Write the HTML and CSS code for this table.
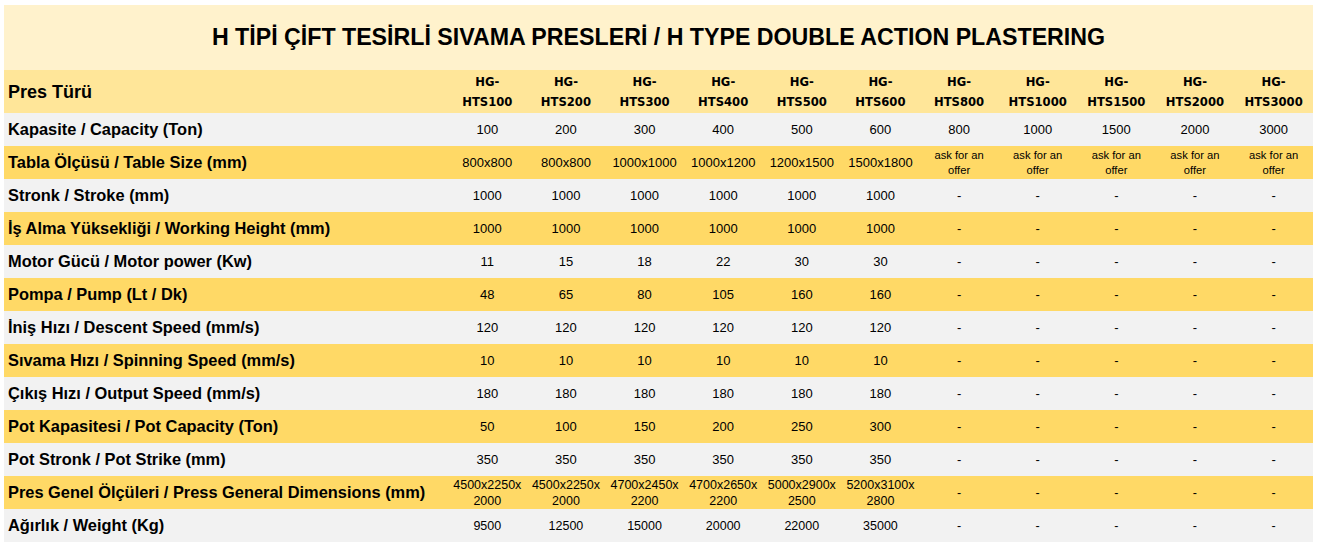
FILE: index.html
```html
<!DOCTYPE html>
<html lang="tr">
<head>
<meta charset="utf-8">
<title>H Tipi Çift Tesirli Sıvama Presleri</title>
<link rel="stylesheet" href="styles.css">
</head>
<body>
<table class="spec">
  <colgroup>
    <col class="c-label">
    <col span="11" class="c-val">
  </colgroup>
  <thead>
    <tr class="title-row"><th colspan="12">H TİPİ ÇİFT TESİRLİ SIVAMA PRESLERİ / H TYPE DOUBLE ACTION PLASTERING</th></tr>
    <tr class="head-row">
      <th class="label main">Pres Türü</th>
      <th>HG-<br>HTS100</th><th>HG-<br>HTS200</th><th>HG-<br>HTS300</th><th>HG-<br>HTS400</th><th>HG-<br>HTS500</th><th>HG-<br>HTS600</th><th>HG-<br>HTS800</th><th>HG-<br>HTS1000</th><th>HG-<br>HTS1500</th><th>HG-<br>HTS2000</th><th>HG-<br>HTS3000</th>
    </tr>
  </thead>
  <tbody>
    <tr class="gray"><th class="label">Kapasite / Capacity (Ton)</th><td>100</td><td>200</td><td>300</td><td>400</td><td>500</td><td>600</td><td>800</td><td>1000</td><td>1500</td><td>2000</td><td>3000</td></tr>
    <tr class="yellow"><th class="label">Tabla Ölçüsü / Table Size (mm)</th><td>800x800</td><td>800x800</td><td>1000x1000</td><td>1000x1200</td><td>1200x1500</td><td>1500x1800</td><td class="ask">ask for an<br>offer</td><td class="ask">ask for an<br>offer</td><td class="ask">ask for an<br>offer</td><td class="ask">ask for an<br>offer</td><td class="ask">ask for an<br>offer</td></tr>
    <tr class="gray"><th class="label">Stronk / Stroke (mm)</th><td>1000</td><td>1000</td><td>1000</td><td>1000</td><td>1000</td><td>1000</td><td>-</td><td>-</td><td>-</td><td>-</td><td>-</td></tr>
    <tr class="yellow"><th class="label">İş Alma Yüksekliği / Working Height (mm)</th><td>1000</td><td>1000</td><td>1000</td><td>1000</td><td>1000</td><td>1000</td><td>-</td><td>-</td><td>-</td><td>-</td><td>-</td></tr>
    <tr class="gray"><th class="label">Motor Gücü / Motor power (Kw)</th><td>11</td><td>15</td><td>18</td><td>22</td><td>30</td><td>30</td><td>-</td><td>-</td><td>-</td><td>-</td><td>-</td></tr>
    <tr class="yellow"><th class="label">Pompa / Pump (Lt / Dk)</th><td>48</td><td>65</td><td>80</td><td>105</td><td>160</td><td>160</td><td>-</td><td>-</td><td>-</td><td>-</td><td>-</td></tr>
    <tr class="gray"><th class="label">İniş Hızı / Descent Speed (mm/s)</th><td>120</td><td>120</td><td>120</td><td>120</td><td>120</td><td>120</td><td>-</td><td>-</td><td>-</td><td>-</td><td>-</td></tr>
    <tr class="yellow"><th class="label">Sıvama Hızı / Spinning Speed (mm/s)</th><td>10</td><td>10</td><td>10</td><td>10</td><td>10</td><td>10</td><td>-</td><td>-</td><td>-</td><td>-</td><td>-</td></tr>
    <tr class="gray"><th class="label">Çıkış Hızı / Output Speed (mm/s)</th><td>180</td><td>180</td><td>180</td><td>180</td><td>180</td><td>180</td><td>-</td><td>-</td><td>-</td><td>-</td><td>-</td></tr>
    <tr class="yellow"><th class="label">Pot Kapasitesi / Pot Capacity (Ton)</th><td>50</td><td>100</td><td>150</td><td>200</td><td>250</td><td>300</td><td>-</td><td>-</td><td>-</td><td>-</td><td>-</td></tr>
    <tr class="gray"><th class="label">Pot Stronk / Pot Strike (mm)</th><td>350</td><td>350</td><td>350</td><td>350</td><td>350</td><td>350</td><td>-</td><td>-</td><td>-</td><td>-</td><td>-</td></tr>
    <tr class="yellow narrow"><th class="label">Pres Genel Ölçüleri / Press General Dimensions (mm)</th><td>4500x2250x<br>2000</td><td>4500x2250x<br>2000</td><td>4700x2450x<br>2200</td><td>4700x2650x<br>2200</td><td>5000x2900x<br>2500</td><td>5200x3100x<br>2800</td><td>-</td><td>-</td><td>-</td><td>-</td><td>-</td></tr>
    <tr class="gray narrow"><th class="label">Ağırlık / Weight (Kg)</th><td>9500</td><td>12500</td><td>15000</td><td>20000</td><td>22000</td><td>35000</td><td>-</td><td>-</td><td>-</td><td>-</td><td>-</td></tr>
  </tbody>
</table>
</body>
</html>
```

FILE: styles.css
```css
html, body {
  margin: 0;
  padding: 0;
  background: #ffffff;
}

body {
  padding: 5px 4px;
  font-family: "Liberation Sans", Arial, sans-serif;
  color: #000000;
}

.spec {
  width: 1309px;
  border-collapse: collapse;
  border-spacing: 0;
  table-layout: fixed;
}

.c-label {
  width: 444px;
}

.spec th,
.spec td {
  padding: 0;
  text-align: center;
  vertical-align: middle;
}

.title-row th {
  height: 65px;
  background: #fff2cc;
  font-size: 23.2px;
  font-weight: bold;
}

.head-row th {
  height: 43px;
  background: #ffe699;
  font-family: "DejaVu Sans", Verdana, sans-serif;
  font-size: 11.6px;
  font-weight: bold;
  line-height: 20px;
}

.head-row th.label.main {
  font-family: "Liberation Sans", Arial, sans-serif;
  font-size: 18px;
  line-height: 20px;
}

.spec tbody tr {
  height: 33px;
}

.gray {
  background: #f2f2f2;
}

.yellow {
  background: #ffd966;
}

.spec .label {
  text-align: left;
  padding-left: 4px;
  font-weight: bold;
  font-size: 16.4px;
}

.spec td {
  font-size: 13px;
}

.spec td.ask {
  font-size: 11.2px;
  line-height: 15px;
}

.narrow td {
  font-size: 12.5px;
  line-height: 16px;
}
```
